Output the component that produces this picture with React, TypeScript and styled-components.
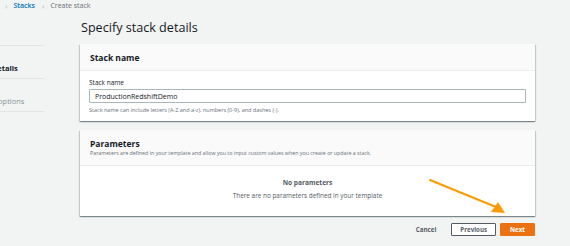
import React from "react";
import styled, { createGlobalStyle } from "styled-components";

const GlobalStyle = createGlobalStyle`
  html, body {
    margin: 0;
    padding: 0;
    width: 570px;
    height: 246px;
    overflow: hidden;
    background: #f2f3f3;
    font-family: "Open Sans", "Liberation Sans", Arial, sans-serif;
    color: #16191f;
  }
`;

const Page = styled.div`
  position: relative;
  width: 570px;
  height: 246px;
  overflow: hidden;
`;

const Crumbs = styled.div`
  display: flex;
  align-items: center;
  height: 11px;
  padding-left: 5px;
  font-size: 7px;
  color: #687078;
`;

const Chevron = styled.span`
  font-size: 8px;
  color: #aab7b8;
  margin: 0 6px 0 0;
`;

const CrumbLink = styled.span`
  color: #0073bb;
  font-weight: 600;
  margin-right: 7px;
`;

const Layout = styled.div`
  display: grid;
  grid-template-columns: 80px 455px;
  align-items: start;
`;

const Nav = styled.ul`
  list-style: none;
  margin: 2px 0 0 -58px;
  padding: 0;
  width: 102px;
`;

const NavItem = styled.li<{ $state: "done" | "current" | "todo" }>`
  height: 33px;
  box-sizing: border-box;
  display: flex;
  align-items: flex-end;
  padding-bottom: 5px;
  border-bottom: 1px solid #e1e4e4;
  font-size: 7.5px;
  font-weight: ${p => (p.$state === "current" ? 700 : 400)};
  color: ${p =>
    p.$state === "done" ? "#0073bb" : p.$state === "current" ? "#16191f" : "#879596"};
  & + & {
    height: 33px;
  }
`;

const Main = styled.main`
  display: flex;
  flex-direction: column;
`;

const Title = styled.h1`
  margin: 8px 0 8px 1px;
  font-size: 12.6px;
  line-height: 17px;
  font-weight: 400;
  color: #16191f;
`;

const Card = styled.section<{ $height: number }>`
  height: ${p => p.$height}px;
  box-sizing: border-box;
  background: #fff;
  box-shadow: 0 1px 1px 0 rgba(0, 28, 36, 0.3), 1px 1px 1px 0 rgba(0, 28, 36, 0.15),
    -1px 1px 1px 0 rgba(0, 28, 36, 0.15);
  margin-bottom: 9px;
`;

const CardHeader = styled.header<{ $tall?: boolean }>`
  box-sizing: border-box;
  height: ${p => (p.$tall ? 36 : 27)}px;
  background: #fafafa;
  border-bottom: 1px solid #eaeded;
  padding: ${p => (p.$tall ? "8px 10px 0" : "0 10px")};
  display: flex;
  flex-direction: column;
  justify-content: ${p => (p.$tall ? "flex-start" : "center")};
`;

const CardTitle = styled.h2`
  margin: 0;
  font-size: 8.5px;
  line-height: 11px;
  font-weight: 700;
  color: #16191f;
`;

const CardDesc = styled.p`
  margin: 0;
  font-size: 5.3px;
  color: #687078;
`;

const CardBody = styled.div<{ $center?: boolean }>`
  padding: ${p => (p.$center ? "12px 0 0" : "7px 9px 0")};
  text-align: ${p => (p.$center ? "center" : "left")};
`;

const Label = styled.label`
  display: block;
  font-size: 6.5px;
  line-height: 9px;
  color: #16191f;
  margin-bottom: 2px;
`;

const Input = styled.div`
  height: 12px;
  border: 1px solid #aab7b8;
  border-radius: 1px;
  display: flex;
  align-items: center;
  padding-left: 5px;
  font-size: 7px;
  color: #16191f;
`;

const Hint = styled.p`
  margin: 3px 0 0;
  font-size: 5.5px;
  color: #687078;
`;

const EmptyTitle = styled.p`
  margin: 0;
  font-size: 6.6px;
  font-weight: 700;
  color: #545b64;
`;

const EmptyText = styled.p`
  margin: 4px 0 0;
  font-size: 6.4px;
  color: #545b64;
`;

const Actions = styled.div`
  display: flex;
  justify-content: flex-end;
  align-items: center;
  gap: 4px;
  margin-top: -2px;
`;

const Button = styled.button<{ $variant: "link" | "normal" | "primary" }>`
  height: 13px;
  padding: 0 ${p => (p.$variant === "link" ? "10px" : p.$variant === "primary" ? "9px" : "8px")};
  font-family: inherit;
  font-size: 6.2px;
  font-weight: 700;
  border-radius: 1px;
  border: 1px solid
    ${p => (p.$variant === "normal" ? "#545b64" : p.$variant === "primary" ? "#ec7211" : "transparent")};
  background: ${p => (p.$variant === "primary" ? "#ec7211" : p.$variant === "normal" ? "#fff" : "transparent")};
  color: ${p => (p.$variant === "primary" ? "#fff" : "#545b64")};
`;

const Arrow = styled.svg`
  position: absolute;
  left: 428px;
  top: 176px;
`;

export default function App() {
  return (
    <Page>
      <GlobalStyle />
      <Crumbs>
        <Chevron>›</Chevron>
        <CrumbLink>Stacks</CrumbLink>
        <Chevron>›</Chevron>
        <span>Create stack</span>
      </Crumbs>
      <Layout>
        <Nav>
          <NavItem $state="done">Specify template</NavItem>
          <NavItem $state="current">Specify stack details</NavItem>
          <NavItem $state="todo">Configure stack options</NavItem>
        </Nav>
        <Main>
          <Title>Specify stack details</Title>
          <Card $height={77}>
            <CardHeader>
              <CardTitle>Stack name</CardTitle>
            </CardHeader>
            <CardBody>
              <Label>Stack name</Label>
              <Input>ProductionRedshiftDemo</Input>
              <Hint>Stack name can include letters (A-Z and a-z), numbers (0-9), and dashes (-).</Hint>
            </CardBody>
          </Card>
          <Card $height={86}>
            <CardHeader $tall>
              <CardTitle>Parameters</CardTitle>
              <CardDesc>
                Parameters are defined in your template and allow you to input custom values when you create or
                update a stack.
              </CardDesc>
            </CardHeader>
            <CardBody $center>
              <EmptyTitle>No parameters</EmptyTitle>
              <EmptyText>There are no parameters defined in your template</EmptyText>
            </CardBody>
          </Card>
          <Actions>
            <Button $variant="link">Cancel</Button>
            <Button $variant="normal">Previous</Button>
            <Button $variant="primary">Next</Button>
          </Actions>
        </Main>
      </Layout>
      <Arrow width="82" height="40" viewBox="0 0 82 40">
        <line x1="2" y1="4" x2="68" y2="31" stroke="#f90" strokeWidth="2" strokeLinecap="round" />
        <polygon points="77,37 63,36 70,26" fill="#f90" />
      </Arrow>
    </Page>
  );
}
